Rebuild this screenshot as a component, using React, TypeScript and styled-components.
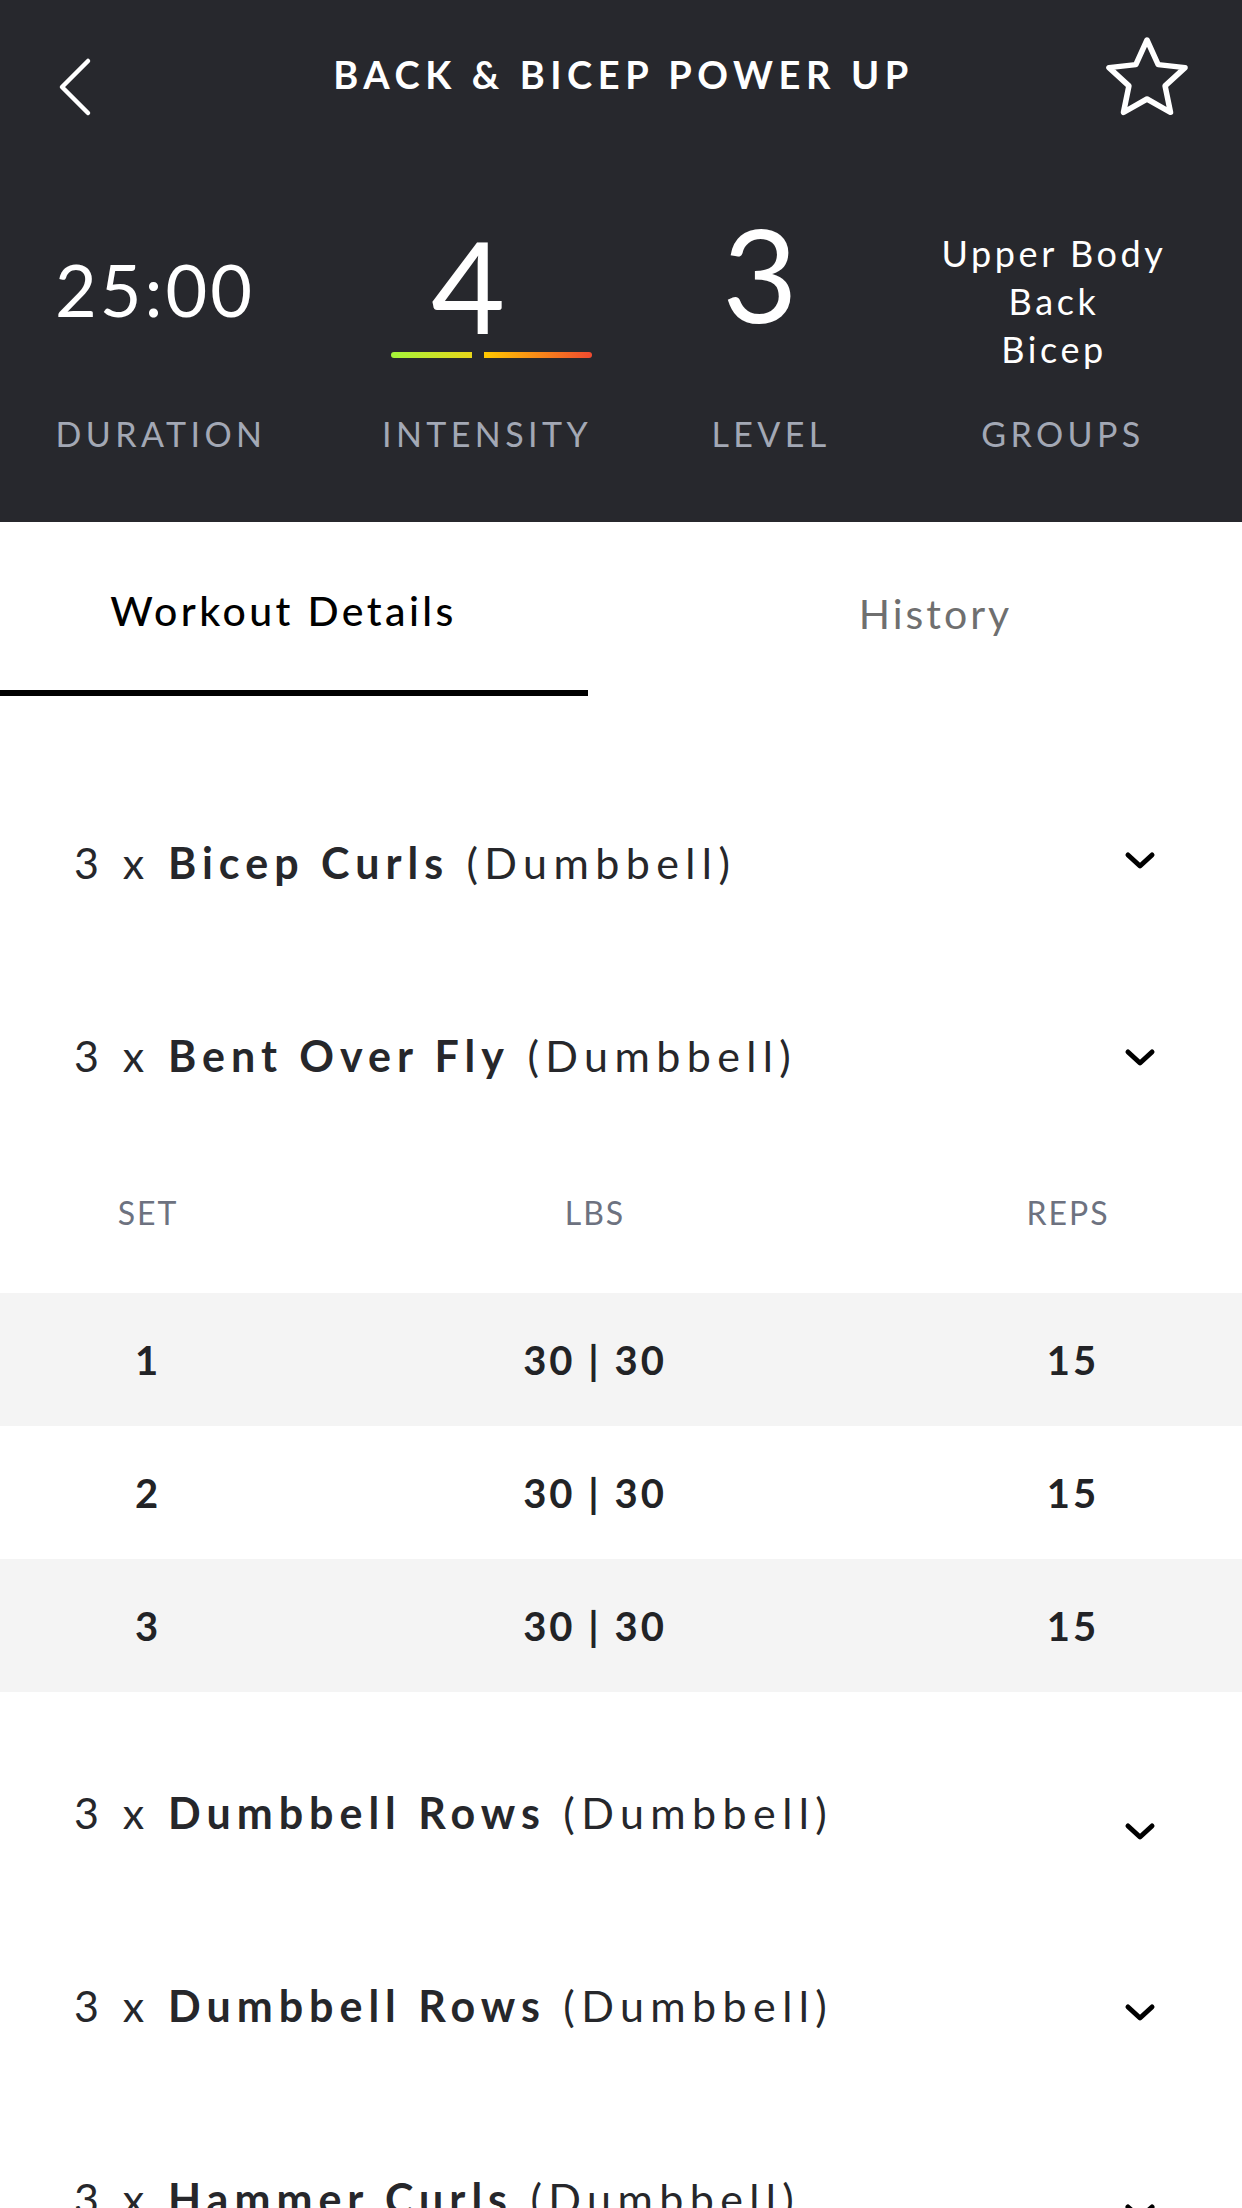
import React from "react";
import styled, { createGlobalStyle } from "styled-components";

const GlobalStyle = createGlobalStyle`
  html, body { margin: 0; padding: 0; background: #ffffff; }
  body { font-family: Lato, "Open Sans", "Liberation Sans", sans-serif; -webkit-font-smoothing: antialiased; }
  * { box-sizing: border-box; }
`;

const Page = styled.div`
  width: 1242px;
  height: 2208px;
  overflow: hidden;
  background: #ffffff;
`;

const Header = styled.header`
  background: #27282d;
  height: 522px;
  display: flex;
  flex-direction: column;
`;

const TopBar = styled.div`
  height: 154px;
  display: grid;
  grid-template-columns: 200px 1fr 200px;
  align-items: center;
`;

const BackButton = styled.button`
  justify-self: start;
  margin-left: 54px;
  margin-top: 20px;
  padding: 0;
  border: 0;
  background: transparent;
  display: flex;
  width: 42px;
  height: 60px;
`;

const StarButton = styled.button`
  justify-self: end;
  margin-right: 48px;
  padding: 0;
  border: 0;
  background: transparent;
  display: flex;
  width: 94px;
  height: 90px;
`;

const Title = styled.h1`
  margin: 0 0 6px 0;
  padding-left: 5px;
  text-align: center;
  color: #ffffff;
  font-size: 38px;
  font-weight: 700;
  letter-spacing: 5.6px;
`;

const Stats = styled.div`
  display: grid;
  grid-template-columns: 316px 324px 256px 330px;
  padding-top: 50px;
`;

const StatCol = styled.div`
  display: flex;
  flex-direction: column;
  align-items: center;
`;

const ValueBox = styled.div<{ $shift?: number }>`
  height: 170px;
  display: flex;
  flex-direction: column;
  align-items: center;
  justify-content: center;
  margin-left: ${(p) => ((p.$shift ?? 0) > 0 ? (p.$shift ?? 0) * 2 : 0)}px;
  margin-right: ${(p) => ((p.$shift ?? 0) < 0 ? -(p.$shift ?? 0) * 2 : 0)}px;
`;

const BigValue = styled.div<{ $size: number; $lift?: number; $spacing?: number }>`
  color: #ffffff;
  font-size: ${(p) => p.$size}px;
  line-height: 1;
  font-weight: 400;
  letter-spacing: ${(p) => p.$spacing ?? 0}px;
  margin-top: ${(p) => -(p.$lift ?? 0)}px;
`;

const Bars = styled.div`
  display: flex;
  gap: 12px;
  margin-top: 3px;
  margin-left: 46px;
`;

const Bar = styled.div<{ $w: number; $from: string; $to: string; $side: "left" | "right" }>`
  width: ${(p) => p.$w}px;
  height: 6px;
  background: linear-gradient(90deg, ${(p) => p.$from}, ${(p) => p.$to});
  border-radius: ${(p) => (p.$side === "left" ? "3px 0 0 3px" : "0 3px 3px 0")};
`;

const GroupText = styled.div`
  color: #ffffff;
  font-size: 36px;
  line-height: 48px;
  text-align: center;
  letter-spacing: 3.6px;
  margin-top: 24px;
`;

const StatLabel = styled.div<{ $shift?: number }>`
  margin-top: 40px;
  margin-left: ${(p) => ((p.$shift ?? 0) > 0 ? (p.$shift ?? 0) * 2 : 0)}px;
  margin-right: ${(p) => ((p.$shift ?? 0) < 0 ? -(p.$shift ?? 0) * 2 : 0)}px;
  padding-left: 4px;
  color: #a3a8b5;
  font-size: 34px;
  line-height: 40px;
  letter-spacing: 4.4px;
`;

const Tabs = styled.nav`
  display: grid;
  grid-template-columns: 1fr 1fr;
  height: 174px;
`;

const Tab = styled.div`
  display: flex;
  flex-direction: column;
`;

const TabLabel = styled.div<{ $active?: boolean; $shift: number }>`
  flex: 1;
  display: flex;
  align-items: center;
  justify-content: center;
  padding-top: 8px;
  padding-right: ${(p) => (p.$shift > 0 ? p.$shift : 0)}px;
  padding-left: ${(p) => (p.$shift < 0 ? -p.$shift : 0)}px;
  font-size: 41px;
  color: ${(p) => (p.$active ? "#000000" : "#6f6f6f")};
  font-weight: ${(p) => (p.$active ? 500 : 400)};
  letter-spacing: ${(p) => (p.$active ? 3.4 : 3.0)}px;
`;

const TabIndicator = styled.div<{ $active?: boolean }>`
  height: 6px;
  width: 588px;
  background: ${(p) => (p.$active ? "#000000" : "transparent")};
`;

const List = styled.section`
  padding-top: 70px;
`;

const ExerciseRow = styled.div`
  height: 193px;
  display: flex;
  align-items: center;
  justify-content: space-between;
  padding: 0 86px 0 74px;
`;

const ExerciseText = styled.div`
  font-size: 43px;
  color: #26272b;
  letter-spacing: 6.4px;
  white-space: nowrap;
`;

const Strong = styled.span`
  font-weight: 700;
  letter-spacing: 6px;
`;

const ChevronWrap = styled.div<{ $dy: number }>`
  display: flex;
  width: 32px;
  height: 20px;
  transform: translateY(${(p) => p.$dy}px);
`;

const SetTable = styled.div`
  padding-bottom: 24px;
`;

const TableGrid = styled.div<{ $alt?: boolean; $head?: boolean }>`
  display: grid;
  grid-template-columns: 296px 598px 348px;
  align-items: center;
  height: ${(p) => (p.$head ? 141 : 133)}px;
  padding-bottom: ${(p) => (p.$head ? 20 : 0)}px;
  background: ${(p) => (p.$alt ? "#f4f4f4" : "transparent")};
`;

const HeadCell = styled.div`
  text-align: center;
  font-size: 32px;
  color: #6d7280;
  letter-spacing: 2px;
`;

const Cell = styled.div<{ $nudge?: number }>`
  text-align: center;
  font-size: 40px;
  font-weight: 700;
  color: #222326;
  letter-spacing: 3px;
  padding-left: ${(p) => p.$nudge ?? 0}px;
`;

const BackIcon = () => (
  <svg width="42" height="60" viewBox="0 0 42 60">
    <polyline points="34,4 8,30 34,56" fill="none" stroke="#ffffff" strokeWidth="4.5" strokeLinecap="round" strokeLinejoin="round" />
  </svg>
);

const StarIcon = () => {
  const cx = 47, cy = 48, R = 40, r = 19;
  const pts: string[] = [];
  for (let i = 0; i < 10; i++) {
    const a = (-90 + i * 36) * (Math.PI / 180);
    const rad = i % 2 === 0 ? R : r;
    pts.push(`${(cx + rad * Math.cos(a)).toFixed(2)},${(cy + rad * Math.sin(a)).toFixed(2)}`);
  }
  return (
    <svg width="94" height="90" viewBox="0 0 94 90">
      <polygon points={pts.join(" ")} fill="none" stroke="#ffffff" strokeWidth="5.5" strokeLinejoin="round" />
    </svg>
  );
};

const Chevron = ({ dy = 0 }: { dy?: number }) => (
  <ChevronWrap $dy={dy}>
    <svg width="32" height="20" viewBox="0 0 32 20">
      <polyline points="4,4 16,15 28,4" fill="none" stroke="#000000" strokeWidth="5" strokeLinecap="round" strokeLinejoin="round" />
    </svg>
  </ChevronWrap>
);

type Exercise = { name: string; dy: number };

const Row = ({ ex }: { ex: Exercise }) => (
  <ExerciseRow>
    <ExerciseText>
      3 x <Strong>{ex.name}</Strong> (Dumbbell)
    </ExerciseText>
    <Chevron dy={ex.dy} />
  </ExerciseRow>
);

const sets = [
  { set: "1", lbs: "30 | 30", reps: "15" },
  { set: "2", lbs: "30 | 30", reps: "15" },
  { set: "3", lbs: "30 | 30", reps: "15" },
];

export default function App() {
  return (
    <Page>
      <GlobalStyle />
      <Header>
        <TopBar>
          <BackButton aria-label="Back">
            <BackIcon />
          </BackButton>
          <Title>BACK &amp; BICEP POWER UP</Title>
          <StarButton aria-label="Favorite">
            <StarIcon />
          </StarButton>
        </TopBar>
        <Stats>
          <StatCol>
            <ValueBox $shift={-3}>
              <BigValue $size={72} $spacing={3}>25:00</BigValue>
            </ValueBox>
            <StatLabel $shift={1}>DURATION</StatLabel>
          </StatCol>
          <StatCol>
            <ValueBox $shift={-10}>
              <BigValue $size={128}>4</BigValue>
              <Bars>
                <Bar $w={81} $from="#a4f53a" $to="#e8d61a" $side="left" />
                <Bar $w={108} $from="#ffc800" $to="#f04a30" $side="right" />
              </Bars>
            </ValueBox>
            <StatLabel $shift={7}>INTENSITY</StatLabel>
          </StatCol>
          <StatCol>
            <ValueBox $shift={-8}>
              <BigValue $size={130} $lift={32}>3</BigValue>
            </ValueBox>
            <StatLabel $shift={1}>LEVEL</StatLabel>
          </StatCol>
          <StatCol>
            <ValueBox $shift={-7}>
              <GroupText>
                Upper Body
                <br />
                Back
                <br />
                Bicep
              </GroupText>
            </ValueBox>
            <StatLabel>GROUPS</StatLabel>
          </StatCol>
        </Stats>
      </Header>

      <Tabs>
        <Tab>
          <TabLabel $active $shift={54}>Workout Details</TabLabel>
          <TabIndicator $active />
        </Tab>
        <Tab>
          <TabLabel $shift={-8}>History</TabLabel>
        </Tab>
      </Tabs>

      <List>
        <Row ex={{ name: "Bicep Curls", dy: -2 }} />
        <Row ex={{ name: "Bent Over Fly", dy: 2 }} />
        <SetTable>
          <TableGrid $head>
            <HeadCell>SET</HeadCell>
            <HeadCell>LBS</HeadCell>
            <HeadCell>REPS</HeadCell>
          </TableGrid>
          {sets.map((s, i) => (
            <TableGrid key={s.set} $alt={i % 2 === 0}>
              <Cell>{s.set}</Cell>
              <Cell>{s.lbs}</Cell>
              <Cell $nudge={10}>{s.reps}</Cell>
            </TableGrid>
          ))}
        </SetTable>
        <Row ex={{ name: "Dumbbell Rows", dy: 19 }} />
        <Row ex={{ name: "Dumbbell Rows", dy: 7 }} />
        <Row ex={{ name: "Hammer Curls", dy: 14 }} />
      </List>
    </Page>
  );
}
